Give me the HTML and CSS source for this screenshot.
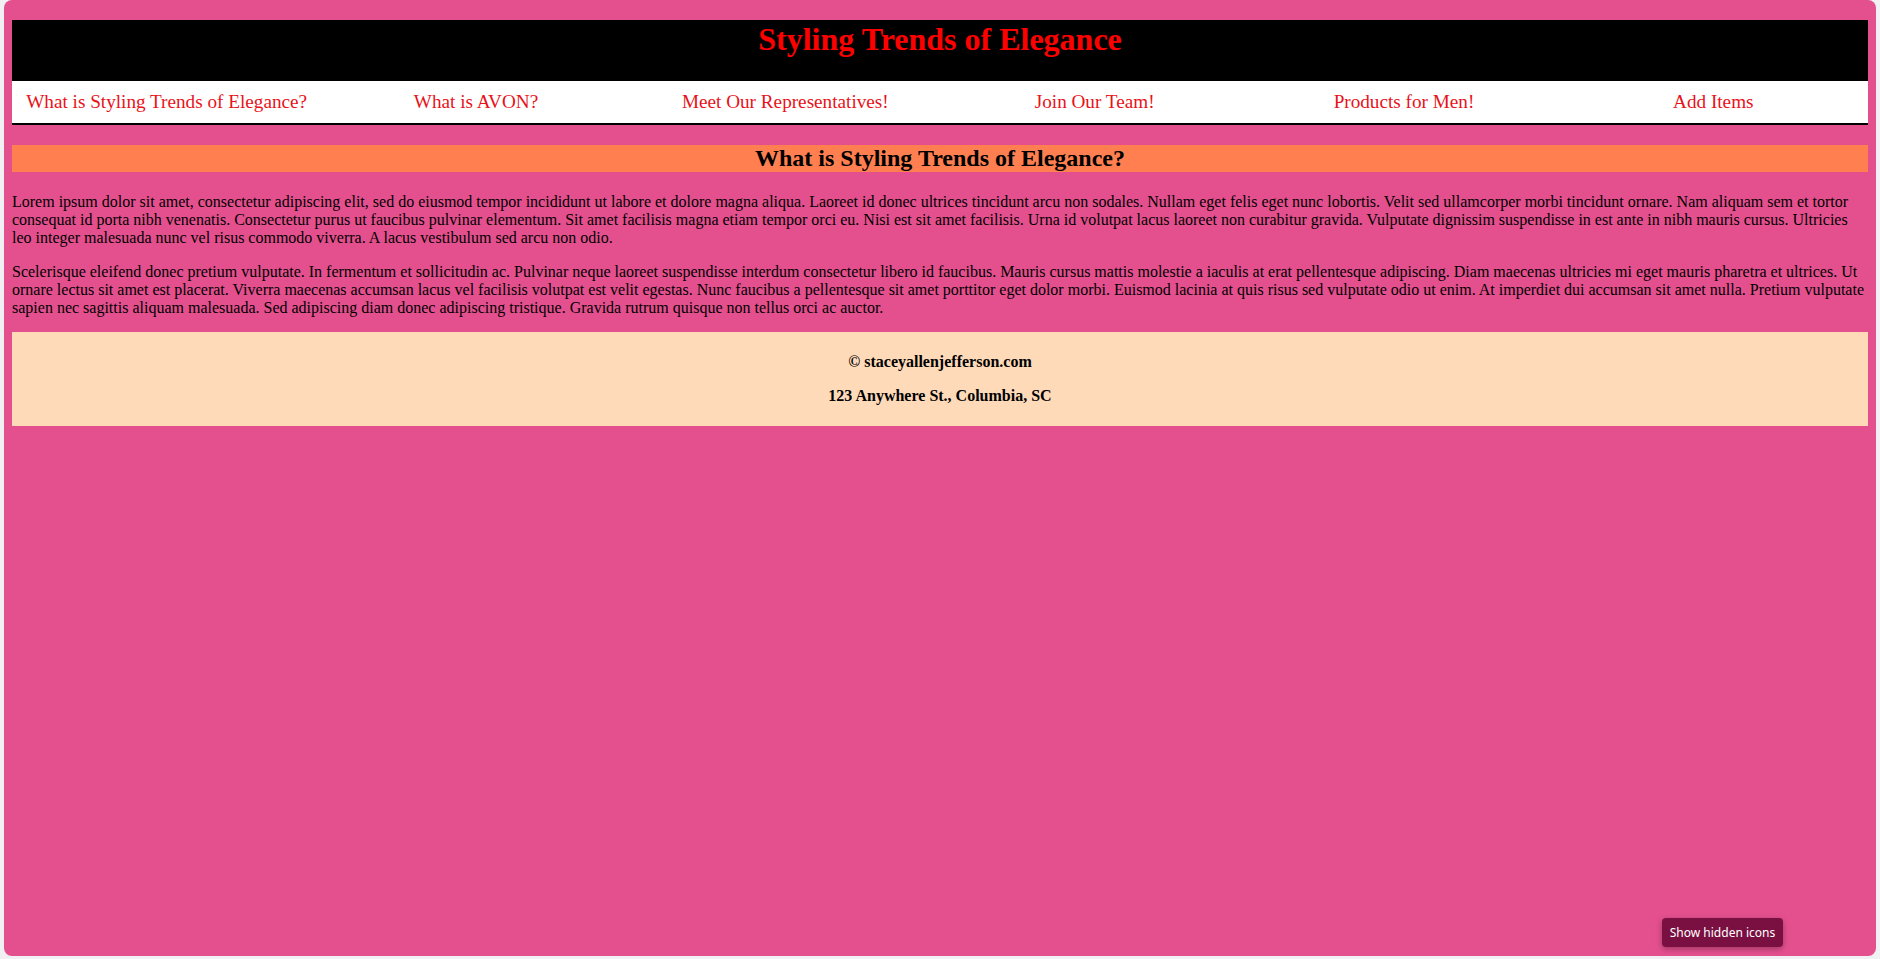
FILE: index.html
```html
<!DOCTYPE html>
<html lang="en">
<head>
<meta charset="utf-8">
<title>Styling Trends of Elegance</title>
<link rel="stylesheet" href="styles.css">
</head>
<body>
<div class="window">
  <header class="site-header">
    <h1 class="site-title">Styling Trends of Elegance</h1>
  </header>
  <nav class="site-nav">
    <a href="#">What is Styling Trends of Elegance?</a>
    <a href="#">What is AVON?</a>
    <a href="#">Meet Our Representatives!</a>
    <a href="#">Join Our Team!</a>
    <a href="#">Products for Men!</a>
    <a href="#">Add Items</a>
  </nav>
  <main class="content">
    <h2 class="section-title">What is Styling Trends of Elegance?</h2>
    <p>Lorem ipsum dolor sit amet, consectetur adipiscing elit, sed do eiusmod tempor incididunt ut labore et dolore magna aliqua. Laoreet id donec ultrices tincidunt arcu non sodales. Nullam eget felis eget nunc lobortis. Velit sed ullamcorper morbi tincidunt ornare. Nam aliquam sem et tortor consequat id porta nibh venenatis. Consectetur purus ut faucibus pulvinar elementum. Sit amet facilisis magna etiam tempor orci eu. Nisi est sit amet facilisis. Urna id volutpat lacus laoreet non curabitur gravida. Vulputate dignissim suspendisse in est ante in nibh mauris cursus. Ultricies leo integer malesuada nunc vel risus commodo viverra. A lacus vestibulum sed arcu non odio.</p>
    <p>Scelerisque eleifend donec pretium vulputate. In fermentum et sollicitudin ac. Pulvinar neque laoreet suspendisse interdum consectetur libero id faucibus. Mauris cursus mattis molestie a iaculis at erat pellentesque adipiscing. Diam maecenas ultricies mi eget mauris pharetra et ultrices. Ut ornare lectus sit amet est placerat. Viverra maecenas accumsan lacus vel facilisis volutpat est velit egestas. Nunc faucibus a pellentesque sit amet porttitor eget dolor morbi. Euismod lacinia at quis risus sed vulputate odio ut enim. At imperdiet dui accumsan sit amet nulla. Pretium vulputate sapien nec sagittis aliquam malesuada. Sed adipiscing diam donec adipiscing tristique. Gravida rutrum quisque non tellus orci ac auctor.</p>
  </main>
  <footer class="site-footer">
    <p>&copy; staceyallenjefferson.com</p>
    <p>123 Anywhere St., Columbia, SC</p>
  </footer>
  <div class="tooltip">Show hidden icons</div>
</div>
</body>
</html>
```
FILE: styles.css
```css
html, body {
  margin: 0;
  padding: 0;
}
body {
  background: #f1f1f3;
  font-family: "Liberation Serif", "Times New Roman", serif;
  font-size: 16px;
  color: #000;
}
.window {
  position: relative;
  box-sizing: border-box;
  height: 956px;
  margin: 0 4px;
  padding: 20px 8px 8px;
  background: #e4508e;
  border-radius: 8px;
  overflow: hidden;
}
.site-header {
  background: #000;
  padding: 1px 0 23px;
}
.site-title {
  margin: 0;
  font-size: 32px;
  line-height: 37px;
  font-weight: bold;
  color: #ff0000;
  text-align: center;
}
.site-nav {
  display: flex;
  background: #fff;
  border-bottom: 2px solid #000;
}
.site-nav a {
  flex: 1 1 0;
  text-align: center;
  font-size: 19.2px;
  line-height: 22px;
  padding: 10px 0 10px;
  color: #e8121a;
  text-decoration: none;
}
.section-title {
  margin: 20px 0 21px;
  background: #ff7f50;
  font-size: 24px;
  font-weight: bold;
  text-align: center;
}
.content p {
  margin: 16px 0;
}
.content p:last-child {
  margin-bottom: 15px;
}
.site-footer {
  margin-top: 0;
  background: #ffdab9;
  text-align: center;
  font-weight: bold;
  padding: 5px 0 5px;
}
.site-footer p {
  margin: 16px 0;
}
.tooltip {
  position: absolute;
  left: 1658px;
  top: 918px;
  width: 121px;
  height: 29px;
  box-sizing: border-box;
  background: #7a0f42;
  color: #fff;
  border-radius: 4px;
  box-shadow: 0 2px 6px rgba(0, 0, 0, 0.3);
  font-family: "Noto Sans", "Open Sans", sans-serif;
  font-size: 12px;
  line-height: 29px;
  text-align: center;
}
```
